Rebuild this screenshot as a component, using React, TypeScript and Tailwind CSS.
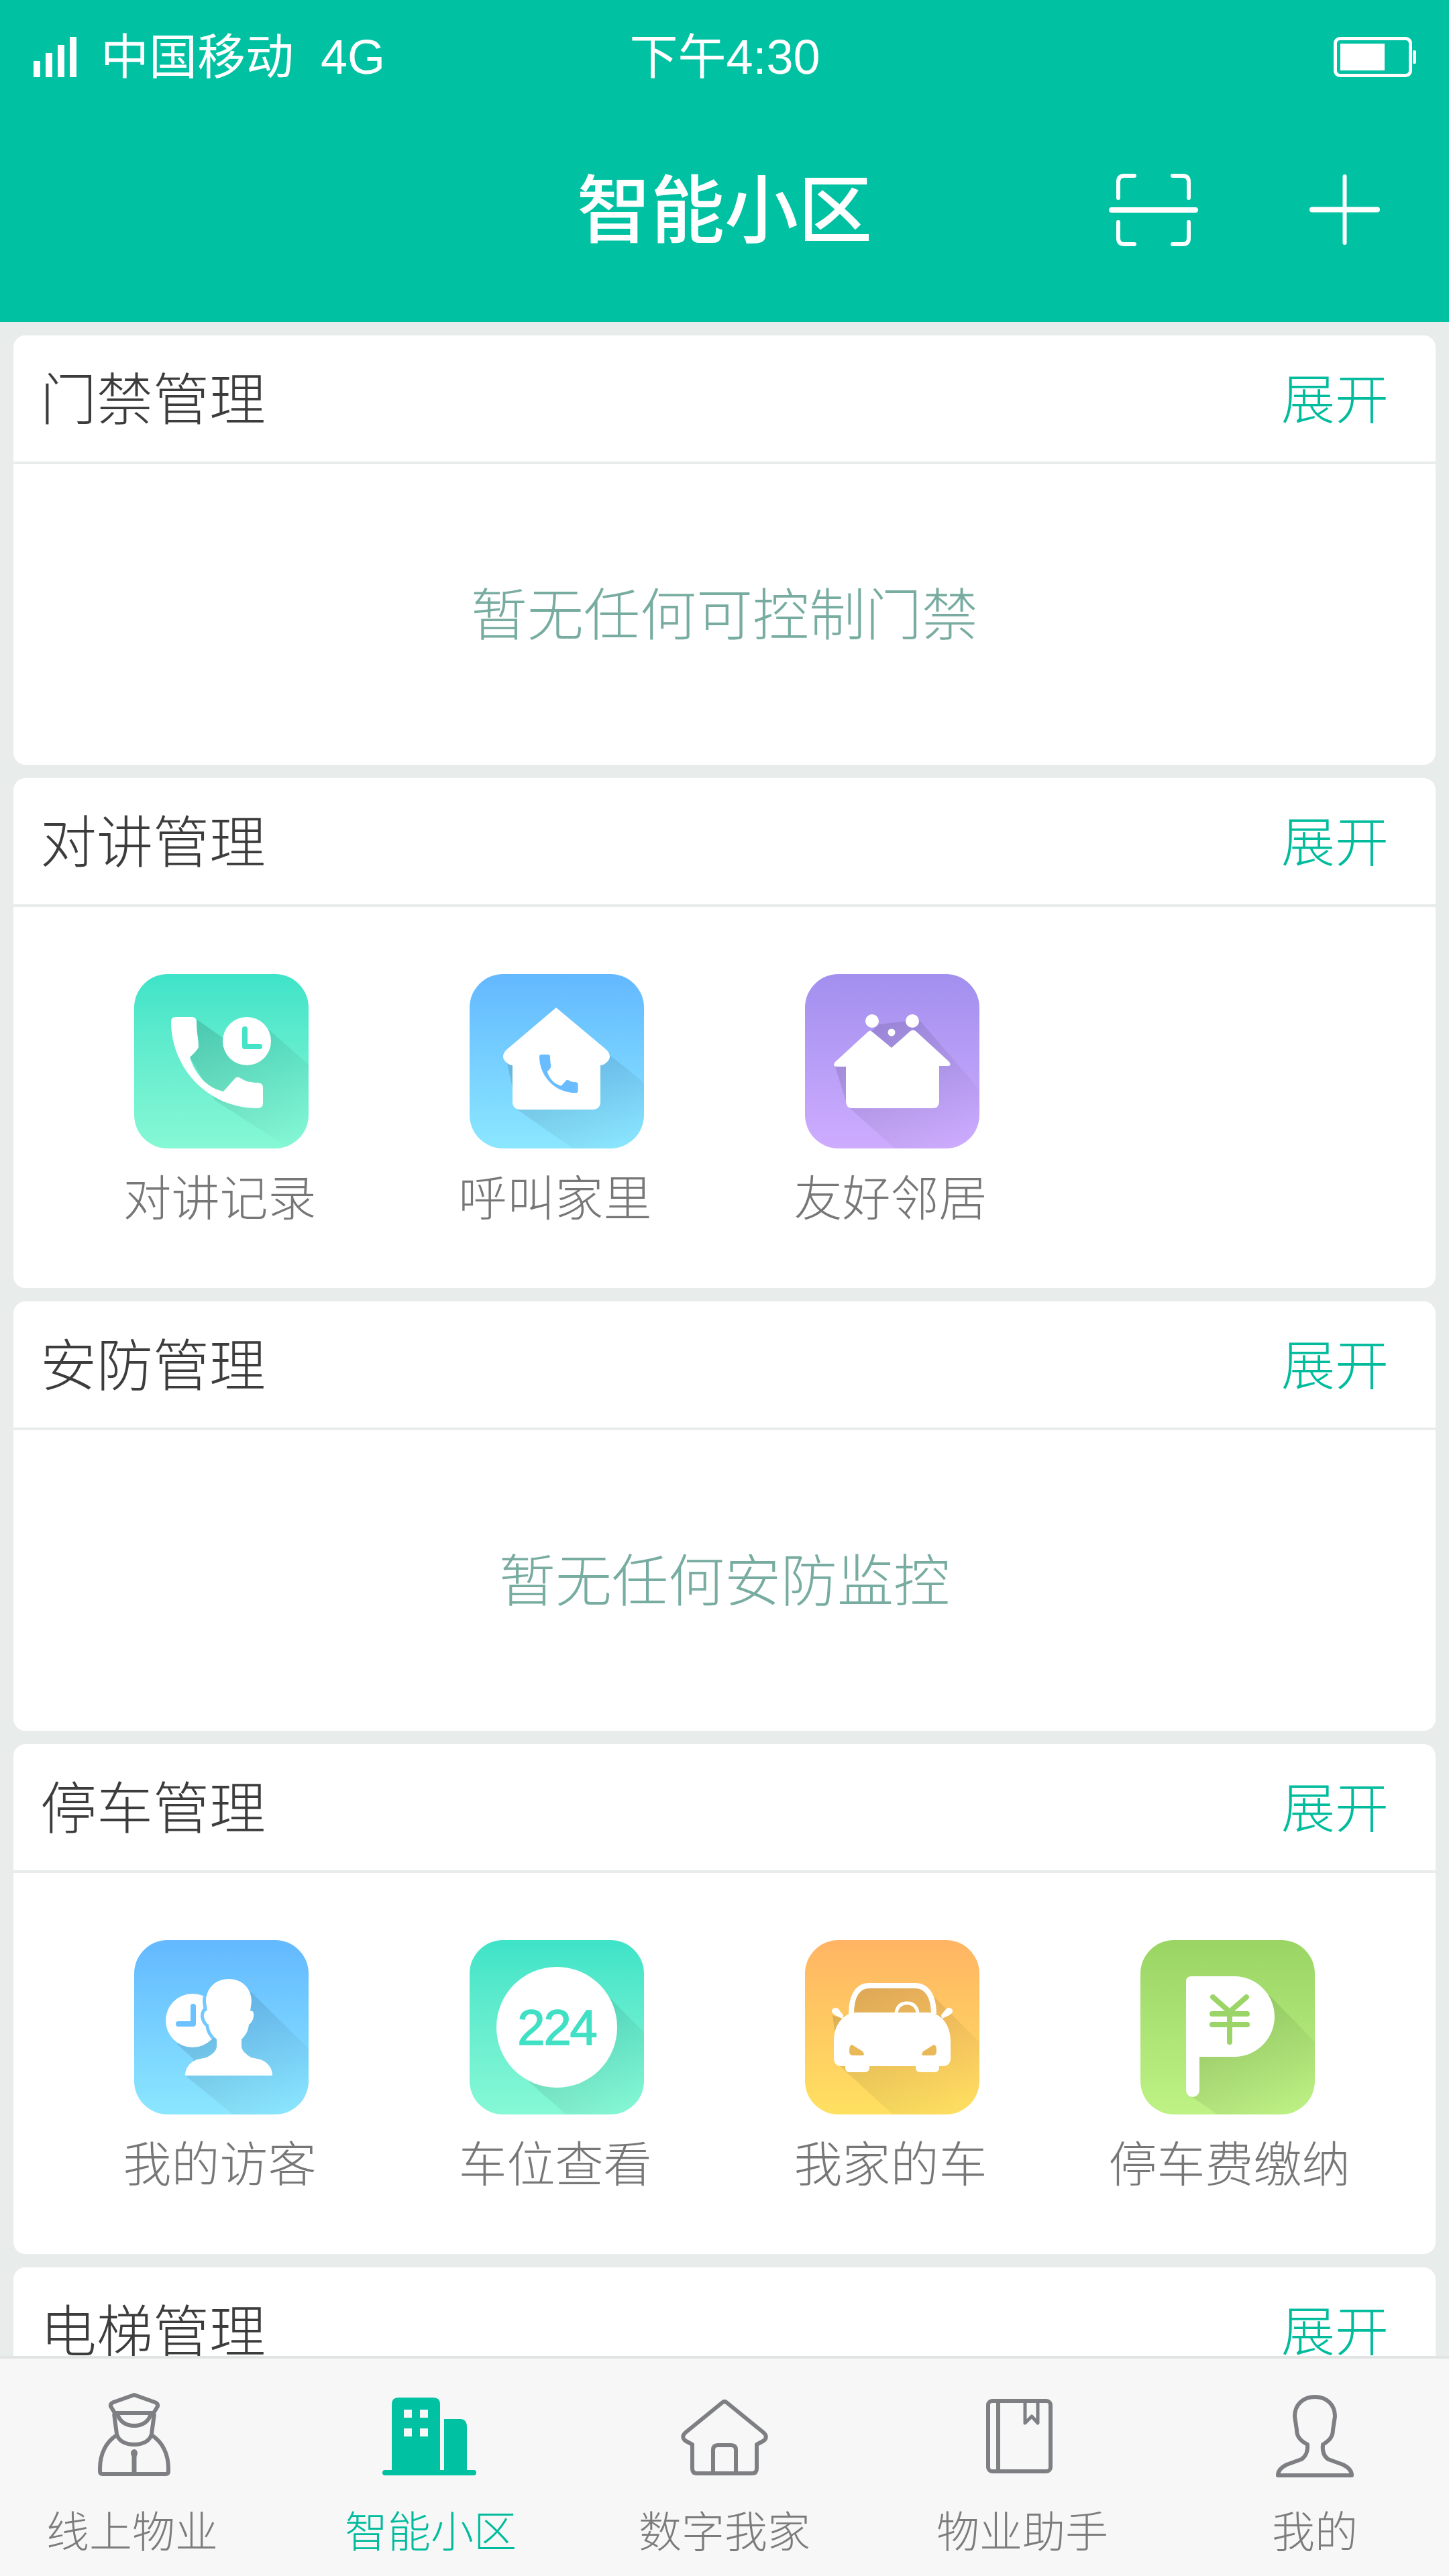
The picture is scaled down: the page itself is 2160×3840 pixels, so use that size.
import { useId, type ReactNode } from 'react'

const cjk = "font-['Liberation_Sans','Noto_Sans_CJK_SC',sans-serif]"

// long shadow behind the white glyphs, fades out toward the corner
function Shadow({ points }: { points: string }) {
  const id = useId()
  return (
    <>
      <linearGradient id={id} x1="0.1" y1="0.1" x2="0.95" y2="0.95">
        <stop offset="0" stopColor="#000" stopOpacity="0.13" />
        <stop offset="1" stopColor="#000" stopOpacity="0" />
      </linearGradient>
      <polygon points={points} fill={`url(#${id})`} />
    </>
  )
}

const phonePath =
  'M62 64 L86 64 Q93 64 93 72 C93 88 96 96 96 108 Q96 112 83 124 C90 148 108 170 133 175 L150 156 Q153 152 158 155 C166 160 174 162 184 162 Q192 162 192 170 L192 192 Q192 200 184 200 C110 200 55 140 55 71 Q55 64 62 64 Z'

function PhoneTile() {
  return (
    <svg viewBox="0 0 260 260" className="block w-full h-full">
      <Shadow points="94,68 132,95 168,64 203,85 260,135 260,260 232,260 120,188 83,124" />
      <path d={phonePath} fill="#fff" />
      <circle cx="168" cy="100" r="36" fill="#fff" />
      <path d="M165 82 V108 H187" fill="none" stroke="#45e3c8" strokeWidth="8" strokeLinecap="round" strokeLinejoin="round" />
    </svg>
  )
}

function CallHomeTile() {
  return (
    <svg viewBox="0 0 260 260" className="block w-full h-full">
      <Shadow points="55,128 64,170 71,202 154,260 260,260 260,162 208,120" />
      <path
        d="M129 50 L203 112 Q214 122 205 131 Q200 136 195 136 V190 Q195 202 183 202 H76 Q64 202 64 190 V136 Q59 136 54 131 Q45 122 56 112 Z"
        fill="#fff"
      />
      <g transform="translate(104 120) scale(0.42) translate(-55 -64)">
        <path d={phonePath} fill="#69bdff" />
      </g>
    </svg>
  )
}

function NeighborTile() {
  return (
    <svg viewBox="0 0 260 260" className="block w-full h-full">
      <Shadow points="170,68 110,75 45,138 61,190 67,200 134,260 260,260 260,172" />
      <path
        d="M100 86 L129 110 L157 85 Q161 82 165 85 L214 130 Q220 137 212 137 H200 V190 Q200 200 190 200 H71 Q61 200 61 190 V138 H48 Q40 138 45 131 L94 86 Q97 83 100 86 Z"
        fill="#fff"
      />
      <circle cx="100" cy="70" r="10" fill="#fff" />
      <circle cx="160" cy="70" r="10" fill="#fff" />
      <circle cx="129" cy="87" r="5.5" fill="#fff" />
    </svg>
  )
}

function VisitorTile() {
  const head =
    'M141 58 C162 58 175 73 175 92 L173 106 C177 104 179 108 178 114 C177 120 174 124 171 126 C170 136 166 142 160 148 L160 158 C160 164 166 170 174 175 L188 178 C200 182 206 192 206 202 H76 C76 192 82 182 94 178 L108 175 C118 170 123 164 123 158 L123 148 C116 142 112 136 111 126 C108 124 105 120 104 114 C104 108 106 104 109 106 L107 92 C107 73 120 58 141 58 Z'
  return (
    <svg viewBox="0 0 260 260" className="block w-full h-full">
      <Shadow points="175,78 260,162 260,260 147,260 76,202 89,178 64,155 120,100" />
      <clipPath id="visitor-clock">
        <circle cx="87" cy="120" r="40" />
      </clipPath>
      <circle cx="87" cy="120" r="40" fill="#fff" />
      <path d="M88 99 V125 H66" fill="none" stroke="#6cc1ff" strokeWidth="8" strokeLinecap="round" strokeLinejoin="round" />
      <path d={head} fill="none" stroke="#74c8ff" strokeWidth="10" clipPath="url(#visitor-clock)" />
      <path d={head} fill="#fff" />
    </svg>
  )
}

function ParkingSpotTile() {
  return (
    <svg viewBox="0 0 260 260" className="block w-full h-full">
      <Shadow points="208,85 260,138 260,260 144,260 87,210" />
      <circle cx="130" cy="130" r="90" fill="#fff" />
      <text
        x="130"
        y="156"
        textAnchor="middle"
        fontSize="74"
        letterSpacing="-2"
        stroke="#40e0c4"
        strokeWidth="1.5"
        fill="#40e0c4"
        fontFamily="'Liberation Sans', sans-serif"
      >
        224
      </text>
    </svg>
  )
}

function CarTile() {
  return (
    <svg viewBox="0 0 260 260" className="block w-full h-full">
      <Shadow points="69,110 69,84 96,68 164,68 192,84 200,92 260,152 260,260 131,260 51,187 41,112 56,117" />
      <path d="M69 110 C69 84 78 68 96 68 H164 C182 68 192 84 192 110" fill="none" stroke="#fff" strokeWidth="8" />
      <path d="M136 108 C138 98 144 94 152 94 C160 94 166 98 168 108" fill="none" stroke="#fff" strokeWidth="5" />
      <path
        d="M76 108 H184 C198 108 217 122 217 150 V176 Q217 188 205 188 H200 V190 Q200 197 193 197 H172 Q165 197 165 190 V188 H96 V190 Q96 197 89 197 H67 Q60 197 60 190 V188 H55 Q43 188 43 176 V150 C43 122 62 108 76 108 Z"
        fill="#fff"
      />
      <path d="M56 117 C48 114 40 110 40 106 C40 102 46 99 50 103 L57 112 Z" fill="#fff" />
      <path d="M204 117 C212 114 220 110 220 106 C220 102 214 99 210 103 L203 112 Z" fill="#fff" />
      <path d="M70 156 L86 166 Q90 172 85 172 H72 Q66 172 66 166 Q66 156 70 156 Z" fill="#eab957" />
      <path d="M192 156 L176 166 Q172 172 177 172 H190 Q196 172 196 166 Q196 156 192 156 Z" fill="#eab957" />
    </svg>
  )
}

function ParkingFeeTile() {
  return (
    <svg viewBox="0 0 260 260" className="block w-full h-full">
      <Shadow points="192,82 260,152 260,260 115,260 77,234 88,174" />
      <path
        d="M76 54 H140 C173 54 200 81 200 114 C200 147 173 174 140 174 H88 V224 A10 10 0 0 1 68 224 V62 Q68 54 76 54 Z"
        fill="#fff"
      />
      <path
        d="M108 85 L133 107 L158 85 M107 110 H159 M107 126 H159 M133 107 V152"
        fill="none"
        stroke="#9bd568"
        strokeWidth="8"
        strokeLinecap="round"
      />
    </svg>
  )
}

function OfficerIcon() {
  return (
    <svg viewBox="0 0 200 140" className="block w-[200px] h-[140px]" fill="none" stroke="#7d7f83" strokeWidth="6" strokeLinejoin="round">
      <path d="M100 10 L131 21 Q136 23 135 27 L129 37 H71 L65 27 Q64 23 69 21 Z" />
      <path d="M75 38 C78 50 88 56 100 56 C112 56 122 50 125 38" />
      <path d="M70 38 L74 68 C76 78 86 84 100 84 C114 84 124 78 126 68 L130 38" />
      <path d="M74 70 C58 80 49 98 49 120 V124 Q49 128 53 128 H147 Q151 128 151 124 V120 C151 98 142 80 126 70" />
      <path d="M100 98 V128" strokeWidth="7" />
      <ellipse cx="100" cy="97" rx="5" ry="6" fill="#7d7f83" stroke="none" />
    </svg>
  )
}

function BuildingIcon() {
  return (
    <svg viewBox="0 0 200 140" className="block w-[200px] h-[140px]">
      <path d="M44 24 Q44 14 54 14 H106 Q116 14 116 24 V122 H122 V46 H146 Q156 46 156 58 V122 H166 Q170 122 170 126 Q170 130 166 130 H34 Q30 130 30 126 Q30 122 34 122 H44 Z" fill="#00c1a2" />
      <rect x="62" y="32" width="12" height="12" fill="#f7f7f7" />
      <rect x="86" y="32" width="12" height="12" fill="#f7f7f7" />
      <rect x="62" y="60" width="12" height="12" fill="#f7f7f7" />
      <rect x="86" y="60" width="12" height="12" fill="#f7f7f7" />
    </svg>
  )
}

function HomeIcon() {
  return (
    <svg viewBox="0 0 200 140" className="block w-[200px] h-[140px]" fill="none" stroke="#7d7f83" strokeWidth="6" strokeLinejoin="round">
      <path d="M96 22 Q100 18 104 22 L158 66 Q165 72 159 78 L148 84 V120 Q148 127 141 127 H59 Q52 127 52 120 V84 L41 78 Q35 72 42 66 Z" />
      <path d="M83 127 V92 Q83 85 90 85 H110 Q117 85 117 92 V127" />
    </svg>
  )
}

function BookIcon() {
  return (
    <svg viewBox="0 0 200 140" className="block w-[200px] h-[140px]" fill="none" stroke="#7d7f83" strokeWidth="6" strokeLinejoin="round">
      <rect x="53" y="19" width="93" height="105" rx="6" />
      <path d="M68 19 V124" />
      <path d="M108 19 V52 L118 42 L127 52 V19" strokeWidth="5" />
    </svg>
  )
}

function ProfileIcon() {
  return (
    <svg viewBox="0 0 200 140" className="block w-[200px] h-[140px]" fill="none" stroke="#7d7f83" strokeWidth="6" strokeLinejoin="round">
      <path d="M100 13 C118 13 130 25 130 42 L127 62 C127 72 122 78 112 84 C111 94 114 102 120 106 L142 114 C150 118 155 124 155 130 H45 C45 124 50 118 58 114 L80 106 C86 102 90 94 89 84 C78 78 73 72 73 62 L70 42 C70 25 82 13 100 13 Z" />
    </svg>
  )
}

function Tile({ className, children }: { className: string; children: ReactNode }) {
  return <div className={`w-[260px] h-[260px] rounded-[50px] overflow-hidden bg-linear-to-b ${className}`}>{children}</div>
}

function SectionHeader({ title }: { title: string }) {
  return (
    <div className="h-[192px] pl-[40px] pr-[70px] pt-[6px] flex items-center justify-between border-b-4 border-[#e8ecea]">
      <span className="text-[84px] leading-none text-[#3c3c3c] font-light">{title}</span>
      <span className="text-[80px] leading-none text-[#00bb9c] font-light">展开</span>
    </div>
  )
}

function EmptySection({ title, message }: { title: string; message: string }) {
  return (
    <section className="bg-white rounded-[18px] shrink-0">
      <SectionHeader title={title} />
      <div className="h-[448px] pt-[3px] flex items-center justify-center">
        <span className="text-[84px] leading-none text-[#78aca1] font-light">{message}</span>
      </div>
    </section>
  )
}

function GridSection({ title, items }: { title: string; items: { label: string; tile: ReactNode; nudge?: string }[] }) {
  return (
    <section className="bg-white rounded-[18px] shrink-0">
      <SectionHeader title={title} />
      <div className="h-[568px] px-[60px] pt-[100px] grid grid-cols-4 items-start">
        {items.map(item => (
          <div key={item.label} className="flex flex-col items-center">
            {item.tile}
            <span className={`mt-[25px] text-[72px] leading-[100px] text-[#777777] font-light whitespace-nowrap ${item.nudge ?? 'pr-[5px]'}`}>
              {item.label}
            </span>
          </div>
        ))}
      </div>
    </section>
  )
}

const tabs = [
  { label: '线上物业', icon: <OfficerIcon />, nudge: 'pr-[6px]' },
  { label: '智能小区', icon: <BuildingIcon />, active: true, nudge: 'pl-[4px]' },
  { label: '数字我家', icon: <HomeIcon />, nudge: '' },
  { label: '物业助手', icon: <BookIcon />, nudge: 'pl-[8px]' },
  { label: '我的', icon: <ProfileIcon />, nudge: '' }
]

const intercomItems = [
  { label: '对讲记录', tile: <Tile className="from-[#3de3c8] to-[#86f8d5]"><PhoneTile /></Tile> },
  { label: '呼叫家里', tile: <Tile className="from-[#63b8ff] to-[#8be7ff]"><CallHomeTile /></Tile> },
  { label: '友好邻居', tile: <Tile className="from-[#a28fee] to-[#ceacff]"><NeighborTile /></Tile> }
]

const parkingItems = [
  { label: '我的访客', tile: <Tile className="from-[#63b8ff] to-[#8be7ff]"><VisitorTile /></Tile> },
  { label: '车位查看', tile: <Tile className="from-[#3de3c8] to-[#86f8d5]"><ParkingSpotTile /></Tile> },
  { label: '我家的车', tile: <Tile className="from-[#ffb463] to-[#ffe060]"><CarTile /></Tile> },
  { label: '停车费缴纳', tile: <Tile className="from-[#9ad564] to-[#bef285]"><ParkingFeeTile /></Tile>, nudge: 'pl-[5px]' }
]

export default function App() {
  return (
    <div className={`w-[2160px] h-[3840px] flex flex-col overflow-hidden bg-[#e8ecea] ${cjk}`}>
      {/* Status bar + nav */}
      <header className="h-[480px] shrink-0 bg-[#00c1a2] text-white">
        <div className="h-[170px] pl-[50px] pr-[49px] grid grid-cols-3 items-center">
          <div className="flex items-center">
            <svg viewBox="0 0 65 60" className="w-[65px] h-[60px] block" fill="#fff">
              <rect x="0" y="36" width="10" height="24" />
              <rect x="18" y="24" width="10" height="36" />
              <rect x="36" y="12" width="10" height="48" />
              <rect x="54" y="0" width="10" height="60" />
            </svg>
            <span className="ml-[35px] text-[72px] leading-none whitespace-nowrap">中国移动</span>
            <span className="ml-[40px] text-[72px] leading-none">4G</span>
          </div>
          <div className="text-center text-[72px] leading-none whitespace-nowrap">下午4:30</div>
          <div className="flex justify-end">
            <svg viewBox="0 0 123 60" className="w-[123px] h-[60px] block">
              <rect x="2.5" y="2.5" width="112" height="55" rx="7" fill="none" stroke="#fff" strokeWidth="5" />
              <rect x="10" y="10" width="66" height="40" fill="#fff" />
              <rect x="118" y="20" width="5" height="20" rx="2" fill="#fff" />
            </svg>
          </div>
        </div>
        <div className="h-[285px] pt-[4px] grid grid-cols-3 items-center">
          <div />
          <h1 className="text-center text-[110px] leading-none font-medium">智能小区</h1>
          <div className="pr-[103px] flex justify-end items-center gap-[166px]">
            <svg viewBox="0 0 133 108" className="w-[133px] h-[108px] block -mt-[4px]" fill="none" stroke="#fff" strokeWidth="6" strokeLinecap="round">
              <path d="M14 36 V12 Q14 3 23 3 H38 M95 3 H110 Q119 3 119 12 V36 M14 72 V96 Q14 105 23 105 H38 M95 105 H110 Q119 105 119 96 V72" />
              <path d="M4 54 H129" strokeWidth="8" />
            </svg>
            <svg viewBox="0 0 105 105" className="w-[105px] h-[105px] block -mt-[4px]" fill="none" stroke="#fff" strokeLinecap="round">
              <path d="M52.5 3 V102" strokeWidth="6" />
              <path d="M4 52.5 H101" strokeWidth="8" />
            </svg>
          </div>
        </div>
      </header>

      {/* Sections */}
      <main className="flex-1 min-h-0 overflow-hidden px-5 pt-5 flex flex-col gap-5">
        <EmptySection title="门禁管理" message="暂无任何可控制门禁" />
        <GridSection title="对讲管理" items={intercomItems} />
        <EmptySection title="安防管理" message="暂无任何安防监控" />
        <GridSection title="停车管理" items={parkingItems} />
        <section className="bg-white rounded-[18px] shrink-0">
          <SectionHeader title="电梯管理" />
        </section>
      </main>

      {/* Tab bar */}
      <nav className="h-[328px] shrink-0 bg-[#f7f7f7] border-t-4 border-[#e2e3e3] pt-[44px]">
        <div className="-mx-5 grid grid-cols-5">
          {tabs.map(tab => (
            <div key={tab.label} className="flex flex-col items-center">
              {tab.icon}
              <span className={`mt-[35px] text-[64px] leading-[80px] font-light ${tab.nudge} ${tab.active ? 'text-[#00bb9c]' : 'text-[#7c7c7c]'}`}>
                {tab.label}
              </span>
            </div>
          ))}
        </div>
      </nav>
    </div>
  )
}
